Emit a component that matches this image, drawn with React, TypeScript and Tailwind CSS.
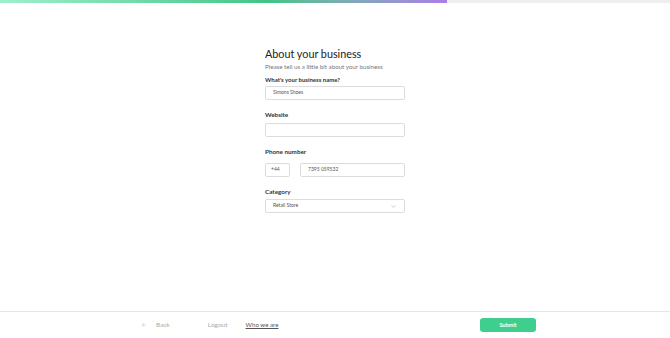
import { ChevronDown, ArrowLeft } from 'lucide-react'

export default function App() {
  return (
    <div className="w-[670px] h-[338px] bg-white flex flex-col font-['Lato',sans-serif] text-[#222]">
      {/* Progress */}
      <div className="h-[3px] bg-[#eeeeee] flex">
        <div className="w-[447px] h-full bg-gradient-to-r from-[#9ef0cc] via-[#3fc585] via-60% to-[#a97de9]" />
      </div>

      {/* Form */}
      <main className="flex-1 flex justify-center">
        <div className="w-[140px] pt-[44px]">
          <h1 className="text-[10.8px] leading-[14px]">About your business</h1>
          <p className="mt-[2px] text-[6.2px] leading-[8px] text-[#777]">Please tell us a little bit about your business</p>
          <label className="block mt-[5px] text-[6px] leading-[8px] font-bold text-[#333]">What's your business name?</label>
          <div className="mt-[2px] h-[14px] border border-[#dcdcdc] rounded-[2px] flex items-center px-[7px] text-[5px] text-[#555]">
            Simons Shoes
          </div>

          <label className="block mt-[11px] text-[6.3px] leading-[8px] font-bold text-[#333]">Website</label>
          <div className="mt-[4px] h-[14px] border border-[#dcdcdc] rounded-[2px]" />

          <label className="block mt-[11px] text-[6.3px] leading-[8px] font-bold text-[#333]">Phone number</label>
          <div className="mt-[7px] flex gap-[10px]">
            <div className="w-[25px] h-[14px] border border-[#dcdcdc] rounded-[2px] flex items-center px-[5px] text-[5px] text-[#555]">
              +44
            </div>
            <div className="flex-1 h-[14px] border border-[#dcdcdc] rounded-[2px] flex items-center px-[7px] text-[5px] text-[#555]">
              7395 059532
            </div>
          </div>

          <label className="block mt-[11px] text-[6.3px] leading-[8px] font-bold text-[#333]">Category</label>
          <div className="mt-[3px] h-[14px] border border-[#dcdcdc] rounded-[2px] flex items-center justify-between px-[7px] text-[5px] text-[#555]">
            <span>Retail Store</span>
            <ChevronDown size={7} strokeWidth={1.5} className="text-[#888]" />
          </div>
        </div>
      </main>

      {/* Footer */}
      <footer className="h-[27px] border-t border-[#e6e6e6] flex items-center pl-[141px] pr-[134px] text-[6.5px]">
        <div className="flex items-center gap-[9px] text-[#aaa]">
          <ArrowLeft size={6} strokeWidth={1.5} />
          <span>Back</span>
        </div>
        <span className="ml-[38px] text-[#aaa]">Logout</span>
        <span className="ml-[18px] text-[6.2px] text-[#555] underline underline-offset-1">Who we are</span>
        <button className="ml-auto w-[56px] h-[14px] rounded-[3px] bg-[#3ecf8e] text-white text-[5.5px] font-bold">
          Submit
        </button>
      </footer>
    </div>
  )
}
